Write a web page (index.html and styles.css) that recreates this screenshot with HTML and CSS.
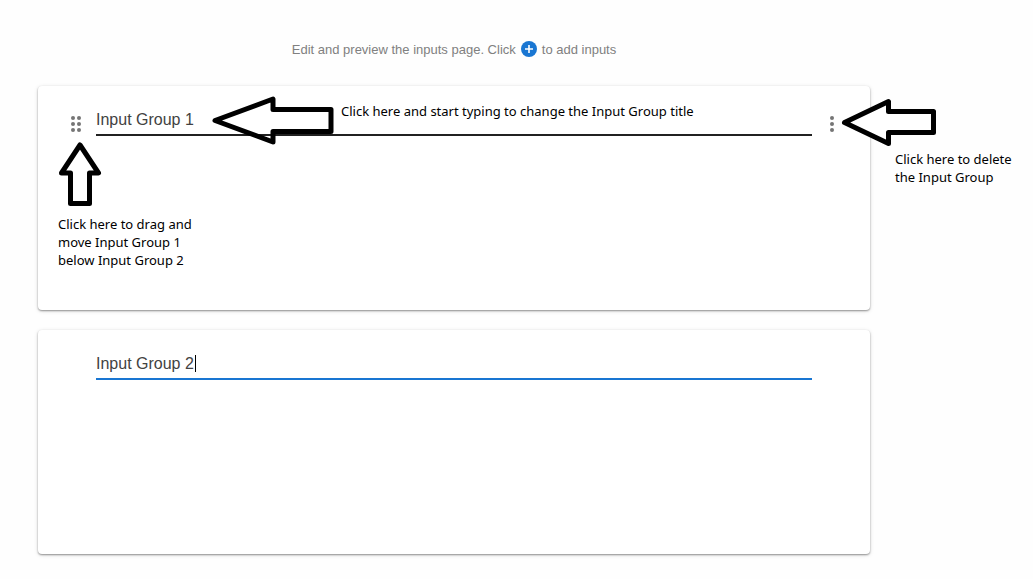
FILE: index.html
```html
<!DOCTYPE html>
<html lang="en">
<head>
<meta charset="utf-8">
<meta name="viewport" content="width=device-width, initial-scale=1">
<title>Input groups</title>
<link rel="stylesheet" href="styles.css">
</head>
<body>
<main class="page">
  <p class="hint">
    <span>Edit and preview the inputs page. Click</span>
    <button class="add" type="button" aria-label="Add input">
      <svg viewBox="0 0 16 16" width="16" height="16" aria-hidden="true"><circle cx="8" cy="8" r="8" fill="#1976d2"/><path d="M8 4v8M4 8h8" stroke="#fff" stroke-width="1.6"/></svg>
    </button>
    <span>to add inputs</span>
  </p>

  <section class="card">
    <button class="handle" type="button" aria-label="Drag group">
      <svg viewBox="0 0 10 18" width="10" height="18" aria-hidden="true" fill="#757575"><circle cx="2" cy="3" r="2"/><circle cx="8" cy="3" r="2"/><circle cx="2" cy="9" r="2"/><circle cx="8" cy="9" r="2"/><circle cx="2" cy="15" r="2"/><circle cx="8" cy="15" r="2"/></svg>
    </button>
    <div class="field">
      <input class="title" type="text" value="Input Group 1" aria-label="Input Group 1 title">
    </div>
    <button class="menu" type="button" aria-label="Group options">
      <svg viewBox="0 0 8 18" width="8" height="18" aria-hidden="true" fill="#757575"><circle cx="5" cy="3" r="2"/><circle cx="5" cy="9" r="2"/><circle cx="5" cy="15" r="2"/></svg>
    </button>

    <svg class="arrow arrow-title" viewBox="0 0 124 50" width="124" height="50" aria-hidden="true"><path d="M5 24.500 63 3V13.500H121V35.500H63V46Z"/></svg>
    <p class="note note-title">Click here and start typing to change the Input Group title</p>
    <svg class="arrow arrow-drag" viewBox="0 0 44 66" width="44" height="66" aria-hidden="true"><path d="M22 3 40.500 31H31.500V61.500H12.500V31H3.500Z"/></svg>
    <p class="note note-drag">Click here to drag and move Input Group 1 below Input Group 2</p>
    <svg class="arrow arrow-delete" viewBox="0 0 96 50" width="96" height="50" aria-hidden="true"><path d="M3.500 24.500 47.500 3.500V13.500H92.500V34.500H47.500V45.500Z"/></svg>
    <p class="note note-delete">Click here to delete the Input Group</p>
  </section>

  <section class="card">
    <div class="field active">
      <input class="title" type="text" value="Input Group 2" aria-label="Input Group 2 title">
      <span class="caret"></span>
    </div>
  </section>
</main>
</body>
</html>
```
FILE: styles.css
```css
* { box-sizing: border-box; }

body {
  margin: 0;
  background: #fefefe;
  font-family: "Liberation Sans", Arial, sans-serif;
}

.page {
  display: flex;
  flex-direction: column;
  gap: 20px;
  padding: 32px 163px 24px 38px;
}

.hint {
  display: flex;
  align-items: center;
  justify-content: center;
  gap: 5px;
  height: 34px;
  margin: 0;
  color: #808080;
  font-size: 13px;
}

button {
  display: flex;
  padding: 0;
  border: 0;
  background: none;
  cursor: pointer;
}

.card {
  position: relative;
  display: grid;
  grid-template-columns: 10px 1fr 8px;
  column-gap: 15px;
  align-items: start;
  min-height: 224px;
  padding: 20px 35px 20px 33px;
  border-radius: 4px;
  background: #fff;
  box-shadow: 0 1px 2px rgba(0, 0, 0, .4), 0 1px 5px rgba(0, 0, 0, .1);
}

.field {
  position: relative;
  grid-column: 2;
  border-bottom: 2px solid #212121;
}

.active { border-color: #1976d2; }

.title {
  display: block;
  width: 100%;
  height: 28px;
  padding: 0;
  border: 0;
  outline: 0;
  background: none;
  color: #424242;
  font: 16px/28px "Liberation Sans", Arial, sans-serif;
}

.caret {
  position: absolute;
  top: 5px;
  left: 99px;
  width: 1px;
  height: 17px;
  background: #000;
}

.handle, .menu { margin-top: 9px; }

.note {
  position: absolute;
  margin: 0;
  color: #000;
  font: 13px/18px "Noto Sans", sans-serif;
}

.note-title { top: 16px; left: 303px; white-space: nowrap; }
.note-drag { top: 129px; left: 20px; width: 142px; }
.note-delete { top: 64px; left: 857px; width: 130px; }

.arrow {
  position: absolute;
  fill: none;
  stroke: #000;
  stroke-width: 5;
  stroke-linejoin: round;
}

.arrow-title { top: 10px; left: 172px; }
.arrow-drag { top: 56px; left: 20px; }
.arrow-delete { top: 12px; left: 803px; fill: #fff; }
```
